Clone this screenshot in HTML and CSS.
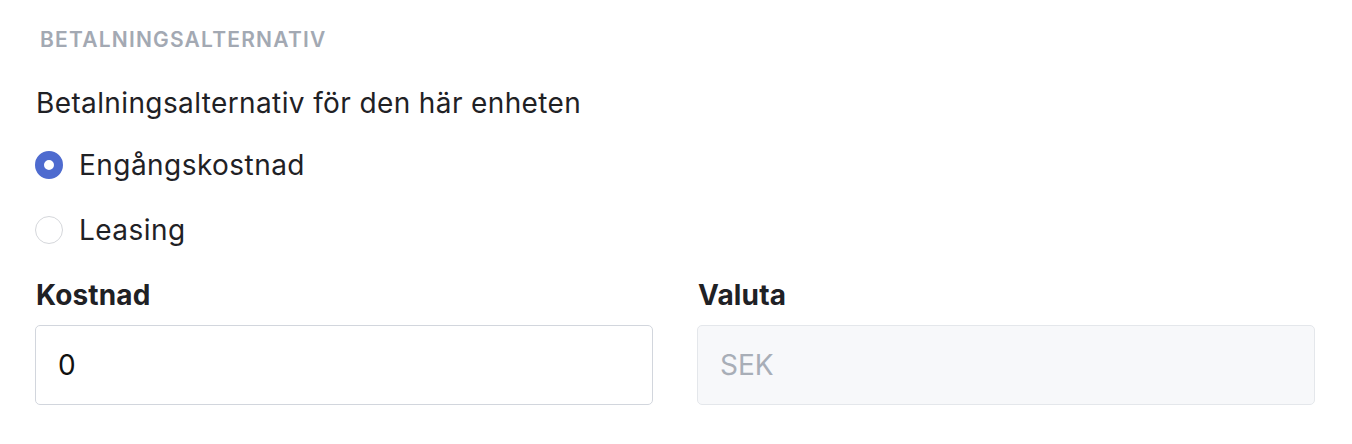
FILE: index.html
```html
<!DOCTYPE html>
<html lang="sv">
<head>
    <meta charset="UTF-8">
    <meta name="viewport" content="width=device-width, initial-scale=1.0">
    <title>Betalningsalternativ</title>
    <link rel="stylesheet" href="styles.css">
</head>
<body>

    <section class="payment">
        <h3 class="section-title">Betalningsalternativ</h3>
        <p class="question">Betalningsalternativ för den här enheten</p>

        <div class="radio-list">
            <label class="radio-item">
                <input type="radio" name="payment" value="once" checked>
                <span class="radio-mark"></span>
                Engångskostnad
            </label>
            <label class="radio-item">
                <input type="radio" name="payment" value="leasing">
                <span class="radio-mark"></span>
                Leasing
            </label>
        </div>

        <div class="field-row">
            <div class="field">
                <label for="cost">Kostnad</label>
                <input type="text" id="cost" value="0">
            </div>
            <div class="field">
                <label for="currency">Valuta</label>
                <input type="text" id="currency" value="SEK" disabled>
            </div>
        </div>
    </section>

</body>
</html>
```

FILE: styles.css
```css
body {
    font-family: 'Inter', 'Liberation Sans', sans-serif;
    margin: 0;
    padding: 0;
    background-color: #ffffff;
    color: #1f2125;
}

.payment {
    padding: 26px 37px 0 35px;
}

.section-title {
    margin: 0 0 0 5px;
    font-size: 21px;
    font-weight: 600;
    text-transform: uppercase;
    letter-spacing: 1.2px;
    color: #a3a9b3;
    line-height: 28px;
}

.question {
    margin: 32px 0 0 1px;
    font-size: 28px;
    letter-spacing: 0.38px;
    line-height: 34px;
}

.radio-list {
    display: flex;
    flex-direction: column;
    gap: 31px;
    margin-top: 28px;
}

.radio-item {
    display: flex;
    align-items: center;
    gap: 16px;
    font-size: 28px;
    letter-spacing: 0.45px;
    line-height: 34px;
    cursor: pointer;
}

.radio-item input {
    display: none;
}

.radio-mark {
    width: 28px;
    height: 28px;
    border-radius: 50%;
    border: 1px solid #d5d7db;
    box-sizing: border-box;
    background: #ffffff;
}

.radio-item input:checked + .radio-mark {
    border: 9px solid #4e6bcf;
}

.field-row {
    display: flex;
    gap: 44px;
    margin-top: 31px;
}

.field {
    flex: 1;
    display: flex;
    flex-direction: column;
}

.field label {
    font-size: 28px;
    font-weight: 700;
    letter-spacing: 0.15px;
    line-height: 34px;
    margin: 0 0 13px 1px;
}

.field input {
    height: 80px;
    box-sizing: border-box;
    padding: 0 22px;
    border: 1px solid #d2d6dd;
    border-radius: 5px;
    font-family: inherit;
    font-size: 28px;
    color: #111;
    background: #ffffff;
}

.field input:disabled {
    background: #f7f8fa;
    border-color: #e4e7eb;
    color: #a8aeb7;
}
```
